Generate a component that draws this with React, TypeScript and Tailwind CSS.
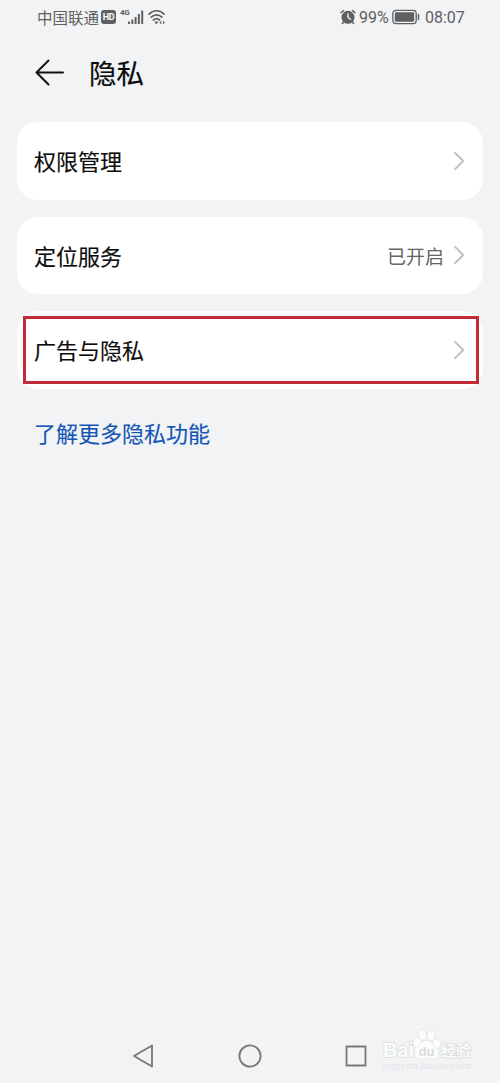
const SETTINGS = [
  { label: "权限管理", value: "", marked: false },
  { label: "定位服务", value: "已开启", marked: false },
  { label: "广告与隐私", value: "", marked: true },
];

export default function App() {
  return (
    <div className="relative flex h-[1083px] w-[500px] flex-col overflow-hidden bg-[#f1f3f5] font-['Noto_Sans_CJK_SC',sans-serif] text-[#0c0c0c]">
      <StatusBar />

      <header className="flex h-[76px] items-center pb-px pl-[35px]">
        <svg className="h-7 w-[30px]" viewBox="0 0 30 28" fill="none" stroke="#111" strokeWidth="2" strokeLinecap="round" strokeLinejoin="round">
          <path d="M13.500 2.500 L1.500 14.500 L13.500 26.500 M1.500 14.500 H28" />
        </svg>
        <h1 className="ml-[24px] pt-px text-[27.500px] leading-9 font-normal [-webkit-text-stroke:0.2px_#0c0c0c]">隐私</h1>
      </header>

      <main className="mt-3 flex flex-col gap-[17px] px-[17px]">
        {SETTINGS.map((s) => (
          <section key={s.label} className="relative flex h-[77.500px] items-center rounded-[21px] bg-white pr-[18px] pl-[17px]">
            <h2 className="flex-1 pb-px text-[22px] leading-8 font-normal [-webkit-text-stroke:0.15px_#0c0c0c]">{s.label}</h2>
            {s.value && <span className="mr-[9px] pt-0.5 text-[19px] leading-8 text-[#666]">{s.value}</span>}
            <Chevron />
            {s.marked && <div className="absolute top-[5px] right-1 left-1.5 h-[68px] border-3 border-[#c32b36]" />}
          </section>
        ))}
        <a className="mt-[10px] ml-[17px] text-[22px] leading-8 font-normal text-[#1556b5] [-webkit-text-stroke:0.15px_#1556b5]">了解更多隐私功能</a>
      </main>

      <nav className="mt-auto flex h-[54px] items-center justify-center gap-[82px]">
        <svg className="h-6 w-6" viewBox="0 0 24 24" fill="none" stroke="#777879" strokeWidth="1.8" strokeLinejoin="round">
          <path d="M2 12 L20 1.500 V22.500 Z" />
        </svg>
        <svg className="h-6 w-6" viewBox="0 0 24 24" fill="none" stroke="#777879" strokeWidth="1.800">
          <circle cx="12" cy="12" r="10.600" />
        </svg>
        <svg className="h-6 w-6" viewBox="0 0 24 24" fill="none" stroke="#777879" strokeWidth="1.800" strokeLinejoin="round">
          <rect x="2.500" y="2.500" width="19" height="19" />
        </svg>
      </nav>

      <Watermark />
    </div>
  );
}

function StatusBar() {
  return (
    <div className="flex h-[34px] shrink-0 items-center pr-[36px] pl-[37px] text-[#5f6062]">
      <span className="text-[15.500px] leading-6">中国联通</span>
      <span className="ml-[2px] flex h-[14px] w-[15px] items-center justify-center rounded-[3px] bg-[#5f6062] font-['Roboto',sans-serif] text-[9px] leading-none font-bold tracking-tighter text-white">
        HD
      </span>
      <span className="mb-2 ml-[4px] w-[9px] font-['Roboto',sans-serif] text-[8px] leading-none font-bold tracking-tighter">4G</span>
      <svg className="-ml-px h-4 w-4" viewBox="0 0 16 16" fill="#5f6062">
        <rect x="0" y="12.500" width="2" height="2.500" rx=".5" />
        <rect x="3.300" y="10.500" width="2" height="4.500" rx=".5" />
        <rect x="6.600" y="8" width="2" height="7" rx=".5" />
        <rect x="9.900" y="5" width="2" height="10" rx=".5" />
        <rect x="13.200" y="1.500" width="2" height="13.500" rx=".5" />
      </svg>
      <svg className="ml-[4px] h-4 w-[18px]" viewBox="0 0 18 16" fill="none" stroke="#5f6062" strokeWidth="1.700" strokeLinecap="round">
        <path d="M1 5.200 C5.500 .6 12 .6 16 5.200" />
        <path d="M3.200 8.200 C6.500 5 10.800 5 13.800 8.200" />
        <path d="M5.500 11 C7.600 9.200 9.500 9.200 11.500 11" />
        <path d="M7.300 13 H9.700 L8.500 14.500 Z" fill="#5f6062" strokeWidth="1" />
        <path d="M13 12.700 L12.200 13.500 L13 14.300 M15.300 12.700 L16.100 13.500 L15.300 14.300" strokeWidth="1.100" />
      </svg>

      <svg className="ml-auto h-4 w-4" viewBox="0 0 16 16" fill="none">
        <circle cx="8" cy="8.300" r="6.500" fill="#5f6062" />
        <path d="M1 3.600 L3.600 1.500 M15 3.600 L12.400 1.500 M3.600 13 L2.400 14.500 M12.400 13 L13.600 14.500" stroke="#5f6062" strokeWidth="1.500" strokeLinecap="round" />
        <path d="M8 5 V8.500 L10.500 10.300" stroke="#f1f3f5" strokeWidth="1.400" strokeLinecap="round" />
      </svg>
      <span className="ml-[3px] w-[30px] pt-px font-['Roboto',sans-serif] text-[16px] leading-6 whitespace-nowrap">99%</span>
      <svg className="ml-[3px] h-4 w-7" viewBox="0 0 28 16" fill="none">
        <rect x=".8" y="1.300" width="23.400" height="13.400" rx="3.200" stroke="#5f6062" strokeWidth="1.300" />
        <rect x="2.800" y="3.300" width="19.400" height="9.400" rx="1.300" fill="#5f6062" />
        <path d="M26.500 5.500 V10.500" stroke="#5f6062" strokeWidth="1.500" strokeLinecap="round" />
      </svg>
      <span className="ml-[5px] w-[39px] pt-0.5 font-['Roboto',sans-serif] text-[16px] leading-6 whitespace-nowrap">08:07</span>
    </div>
  );
}

function Chevron() {
  return (
    <svg className="h-5 w-3" viewBox="0 0 12 20" fill="none" stroke="#bfbfc0" strokeWidth="1.900" strokeLinecap="round" strokeLinejoin="round">
      <path d="M2 1.800 L10.200 10 L2 18.200" />
    </svg>
  );
}

function Watermark() {
  return (
    <svg className="absolute top-[1024px] left-[378px] h-[52px] w-[100px]" viewBox="0 0 100 52" fill="#fbfcfc" stroke="#dadcde" strokeWidth="1.500" strokeLinejoin="round">
      <g fontFamily="Liberation Sans, sans-serif" fontWeight="700" paintOrder="stroke">
        <text x="5" y="33" fontSize="21" textLength="31" lengthAdjust="spacingAndGlyphs">Bai</text>
        <g strokeWidth="1">
          <ellipse cx="39" cy="19" rx="3.800" ry="4.800" />
          <ellipse cx="44.500" cy="11" rx="3.700" ry="5" />
          <ellipse cx="53" cy="11.500" rx="3.700" ry="5" />
          <ellipse cx="58.500" cy="19.500" rx="3.600" ry="4.600" />
          <path d="M48.500 16.500 C43 17 42 21 38.500 24 C34 29 38 36 43 35 C47 34 50 34 54 35 C60 36 63 29 58.500 24 C55 21 54 17 48.500 16.500 Z" />
        </g>
        <text x="40.500" y="32" fontSize="13" fill="#d8dbdd" stroke="none" textLength="16" lengthAdjust="spacingAndGlyphs">du</text>
        <text x="63" y="32" fontSize="15" fontFamily="Noto Sans CJK SC, sans-serif" textLength="30">经验</text>
      </g>
      <text x="4" y="45" fontSize="11" fontFamily="Liberation Serif, serif" fill="#e3e5e7" stroke="none" textLength="89" lengthAdjust="spacingAndGlyphs">jingyan.baidu.com</text>
    </svg>
  );
}
